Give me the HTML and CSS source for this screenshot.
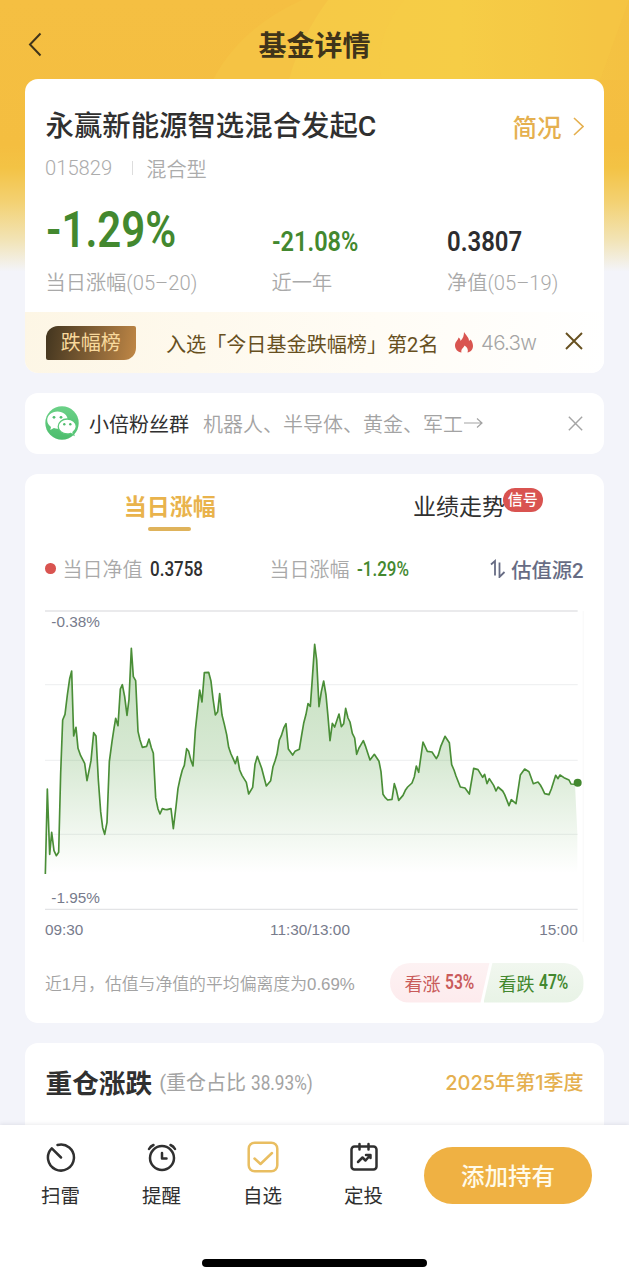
FILE: index.html
```html
<!DOCTYPE html>
<html lang="zh-CN">
<head>
<meta charset="utf-8">
<title>基金详情</title>
<link rel="stylesheet" href="styles.css">
</head>
<body>
<div class="screen">
  <svg class="backdrop" viewBox="0 0 629 280" aria-hidden="true">
    <defs>
      <linearGradient id="base" x1="0" y1="0" x2="0" y2="1">
        <stop offset="0" stop-color="#f5bf42"/><stop offset=".52" stop-color="#f4be40"/>
        <stop offset=".6" stop-color="#f3c345"/><stop offset=".72" stop-color="#f3d172"/>
        <stop offset=".86" stop-color="#f2e4b7"/><stop offset=".97" stop-color="#f3f4fa"/>
      </linearGradient>
      <linearGradient id="ray" x1="0" y1="0" x2="1" y2="0">
        <stop offset="0" stop-color="#f6c946"/><stop offset=".5" stop-color="#f6cc46"/><stop offset="1" stop-color="#f4c142"/>
      </linearGradient>
    </defs>
    <rect width="629" height="280" fill="url(#base)"/>
    <path d="M302 0Q240 28 213 80H629V0Z" fill="#f5c344"/>
    <path d="M328 0Q300 38 289 80H629V0Z" fill="url(#ray)"/>
    <path d="M404 0Q372 40 382 80H600L629 0Z" fill="#f8d04a" opacity=".18"/>
  </svg>

  <header class="nav">
    <svg class="back" viewBox="0 0 14 26"><path d="M12.500 1.500 2 12.500 12.500 23.500"/></svg>
    <h1>基金详情</h1>
  </header>

  <main>
    <section class="card summary">
      <div class="fund-head">
        <h2>永赢新能源智选混合发起C</h2>
        <a class="brief">简况<svg viewBox="0 0 11 19"><path d="M1 1 10 9.500 1 18"/></svg></a>
      </div>
      <div class="fund-meta"><span>015829</span><i></i><span>混合型</span></div>
      <div class="stats">
        <div class="stat"><div class="value"><b class="din big">-1.29%</b></div><label>当日涨幅(05–20)</label></div>
        <div class="stat"><div class="value"><b class="din mid year">-21.08%</b></div><label>近一年</label></div>
        <div class="stat"><div class="value"><b class="din mid net">0.3807</b></div><label>净值(05–19)</label></div>
      </div>
      <div class="rank">
        <span class="rank-tag">跌幅榜</span>
        <span class="rank-text">入选「今日基金跌幅榜」第2名</span>
        <svg class="flame" viewBox="0 0 18 21"><path d="M9 0C10.500 3 14 5 14 9L15.500 7.500C17 9 18 11.500 18 14C18 17.500 15.500 20 12.500 20.500C13.500 18 12.500 15.500 9.500 13.500C9 15.500 5.500 17 6.500 20.500C2.500 20 0 17 0 13.500C0 9.500 3 8.500 3.500 5.500C5 6.500 5.500 7.500 5.500 9C8 6.500 9 3.500 9 0Z"/></svg>
        <span class="heat">46.3w</span>
        <svg class="close brown" viewBox="0 0 18 18"><path d="M1 1 17 17M17 1 1 17"/></svg>
      </div>
    </section>

    <section class="card fans">
      <svg class="wechat" viewBox="0 0 34 34">
        <defs><linearGradient id="wx" x1="0" y1="0" x2="0" y2="1"><stop offset="0" stop-color="#6bd187"/><stop offset="1" stop-color="#4dbd6d"/></linearGradient></defs>
        <circle cx="17" cy="17" r="16.700" fill="url(#wx)"/>
        <path d="M12.500 5.500C6.800 5.500 2.200 9.300 2.200 14.200C2.200 17 3.700 19.300 6 20.900L5.300 24 8.900 22.100C10 22.500 11.200 22.700 12.500 22.700C18.200 22.700 22.800 19 22.800 14.200C22.800 9.300 18.200 5.500 12.500 5.500Z" fill="#fff"/>
        <path d="M22.200 13C17.200 13 13.200 16.300 13.200 20.500C13.200 24.700 17.200 28 22.200 28C23.400 28 24.600 27.800 25.700 27.400L28.800 29 28 26.200C30 24.800 31.300 22.700 31.300 20.500C31.300 16.300 27.300 13 22.200 13Z" fill="#fff" stroke="#5ac879" stroke-width="1.300"/>
        <g fill="#52bd70"><circle cx="9" cy="11.300" r="1.400"/><circle cx="16" cy="11.300" r="1.400"/><circle cx="19.300" cy="18.300" r="1.200"/><circle cx="25.300" cy="18.300" r="1.200"/></g>
      </svg>
      <span class="fans-name">小倍粉丝群</span>
      <span class="fans-text">机器人、半导体、黄金、军工<svg viewBox="0 0 20 12"><path d="M1 6H19M14 1.500 19 6 14 10.500"/></svg></span>
      <svg class="close" viewBox="0 0 18 18"><path d="M1 1 17 17M17 1 1 17"/></svg>
    </section>

    <section class="card trend">
      <div class="tabs">
        <div class="tab active"><span>当日涨幅</span></div>
        <div class="tab"><span>业绩走势<em>信号</em></span></div>
      </div>
      <div class="legend">
        <div class="item first"><i class="dot"></i><span>当日净值</span><b class="din small dark">0.3758</b></div>
        <div class="item second"><span>当日涨幅</span><b class="din small green">-1.29%</b></div>
        <div class="source"><svg viewBox="0 0 16 19"><path d="M1 5.500 5 2V16.500M9.500 3.500V18L14.500 13"/></svg>估值源2</div>
      </div>
      <svg class="chart" viewBox="45 0 1617 1026">
        <defs><linearGradient id="area" gradientUnits="userSpaceOnUse" x1="0" y1="135" x2="0" y2="820"><stop offset="0" stop-color="#4a9b38" stop-opacity=".33"/><stop offset=".5" stop-color="#4a9b38" stop-opacity=".22"/><stop offset="1" stop-color="#4a9b38" stop-opacity="0"/></linearGradient></defs>
        <g class="grid"><path class="edge" d="M45 33H1643M45 928H1643"/><path d="M45 254H1643M45 481H1643M45 703H1643"/><path class="side" d="M1660 33V1026"/></g>
        <path fill="url(#area)" d="M46 822L52 567 59 763 65 697 72 752 79 767 86 757 92 520 98 360 105 343 112 285 119 236 125 213 131 408 138 382 144 445 152 467 164 490 171 542 183 482 191 398 198 408 205 540 212 635 218 683 224 703 231 667 238 485 246 425 252 385 257 355 264 377 271 267 277 254 284 290 291 346 297 298 304 145 310 230 317 242 324 394 330 420 337 442 350 439 357 417 364 443 370 460 377 593 384 627 390 642 397 626 404 628 411 629 423 626 430 686 438 620 444 565 450 537 457 510 463 496 470 446 476 454 483 482 489 498 496 390 502 335 509 270 516 306 523 218 536 217 543 244 549 296 556 345 563 335 569 281 576 345 583 373 590 404 596 442 603 462 609 475 616 491 622 470 629 510 636 526 649 547 656 582 668 562 675 493 682 469 689 488 695 505 702 532 709 558 722 542 729 500 735 483 741 463 748 420 754 407 762 382 768 371 775 447 788 465 795 454 808 448 815 405 821 370 828 343 834 311 841 319 847 235 854 133 860 180 867 320 874 275 881 243 888 285 894 350 900 422 907 370 914 381 927 342 934 380 941 371 947 325 954 354 960 366 967 400 974 414 980 463 987 444 993 434 1000 422 1007 440 1020 480 1033 463 1047 484 1053 515 1059 583 1066 593 1073 600 1086 598 1093 551 1099 570 1106 601 1119 586 1127 569 1133 561 1146 549 1153 530 1159 498 1166 517 1179 426 1192 454 1206 456 1219 476 1225 465 1232 440 1245 409 1258 428 1265 494 1272 510 1278 528 1291 561 1305 564 1318 582 1331 505 1344 509 1358 532 1364 523 1371 551 1378 536 1391 556 1398 573 1404 561 1418 573 1424 584 1437 617 1444 599 1458 611 1465 565 1471 525 1484 507 1497 515 1510 551 1524 546 1531 555 1537 566 1544 581 1557 584 1564 567 1577 526 1584 536 1590 525 1602 533 1617 540 1623 552 1635 553L1642 700V822H46Z"/>
        <path class="line" d="M46 822L52 567 59 763 65 697 72 752 79 767 86 757 92 520 98 360 105 343 112 285 119 236 125 213 131 408 138 382 144 445 152 467 164 490 171 542 183 482 191 398 198 408 205 540 212 635 218 683 224 703 231 667 238 485 246 425 252 385 257 355 264 377 271 267 277 254 284 290 291 346 297 298 304 145 310 230 317 242 324 394 330 420 337 442 350 439 357 417 364 443 370 460 377 593 384 627 390 642 397 626 404 628 411 629 423 626 430 686 438 620 444 565 450 537 457 510 463 496 470 446 476 454 483 482 489 498 496 390 502 335 509 270 516 306 523 218 536 217 543 244 549 296 556 345 563 335 569 281 576 345 583 373 590 404 596 442 603 462 609 475 616 491 622 470 629 510 636 526 649 547 656 582 668 562 675 493 682 469 689 488 695 505 702 532 709 558 722 542 729 500 735 483 741 463 748 420 754 407 762 382 768 371 775 447 788 465 795 454 808 448 815 405 821 370 828 343 834 311 841 319 847 235 854 133 860 180 867 320 874 275 881 243 888 285 894 350 900 422 907 370 914 381 927 342 934 380 941 371 947 325 954 354 960 366 967 400 974 414 980 463 987 444 993 434 1000 422 1007 440 1020 480 1033 463 1047 484 1053 515 1059 583 1066 593 1073 600 1086 598 1093 551 1099 570 1106 601 1119 586 1127 569 1133 561 1146 549 1153 530 1159 498 1166 517 1179 426 1192 454 1206 456 1219 476 1225 465 1232 440 1245 409 1258 428 1265 494 1272 510 1278 528 1291 561 1305 564 1318 582 1331 505 1344 509 1358 532 1364 523 1371 551 1378 536 1391 556 1398 573 1404 561 1418 573 1424 584 1437 617 1444 599 1458 611 1465 565 1471 525 1484 507 1497 515 1510 551 1524 546 1531 555 1537 566 1544 581 1557 584 1564 567 1577 526 1584 536 1590 525 1602 533 1617 540 1623 552 1643 553"/>
        <circle cx="1643" cy="548" r="12" fill="#43882f"/>
        <g class="axis"><text x="64" y="81">-0.38%</text><text x="64" y="910">-1.95%</text><text x="45" y="1005">09:30</text><text x="840" y="1005" text-anchor="middle">11:30/13:00</text><text x="1643" y="1005" text-anchor="end">15:00</text></g>
      </svg>
      <div class="poll-row">
        <p>近1月，估值与净值的平均偏离度为0.69%</p>
        <div class="poll"><div class="vote up"><span>看涨</span><b class="din vote-num">53%</b></div><div class="vote down"><span>看跌</span><b class="din vote-num">47%</b></div></div>
      </div>
    </section>

    <section class="card holdings">
      <h3>重仓涨跌</h3><span class="ratio">(重仓占比 <b class="din ratio-num">38.93%)</b></span><span class="quarter">2025年第1季度</span>
    </section>
  </main>

  <footer class="toolbar">
    <div class="actions">
      <div class="action"><svg viewBox="0 0 32 32"><path d="M12.500 4A13 13 0 1 1 6.800 7.300L16 16.500"/></svg><span>扫雷</span></div>
      <div class="action"><svg viewBox="0 0 32 32"><circle cx="16" cy="17" r="12"/><path d="M16 12V17.500H20.500M3 8Q4.500 5.300 7.500 4M24.500 4Q27.500 5.300 29 8"/></svg><span>提醒</span></div>
      <div class="action gold"><svg viewBox="0 0 32 32"><rect x="1.700" y="1.700" width="28.600" height="28.600" rx="6"/><path d="M7.500 17.500 13.500 23 25 12"/></svg><span>自选</span></div>
      <div class="action"><svg viewBox="0 0 32 32"><rect x="3.500" y="5.500" width="25" height="23" rx="3"/><path d="M11.500 3V8.500M20.500 3V8.500M10 21 14.500 16.500 17.500 19.500 22 14.500M18 14H22.500V17"/></svg><span>定投</span></div>
    </div>
    <button>添加持有</button>
    <i class="home"></i>
  </footer>
</div>
</body>
</html>
```
FILE: styles.css
```css
* { box-sizing: border-box; margin: 0; padding: 0; }
body { background: #f3f4fa; font-family: Roboto, "Noto Sans CJK SC", sans-serif; color: #303030; }
i, em { font-style: normal; }
svg { display: block; fill: none; flex: none; }
.screen { position: relative; width: 629px; height: 1280px; overflow: hidden; }
.backdrop { position: absolute; left: 0; top: 0; width: 629px; height: 280px; }
.nav { position: relative; height: 79px; padding-top: 27px; }
.nav h1 { font-size: 28px; line-height: 40px; font-weight: 600; text-align: center; color: #40341a; }
.back { position: absolute; left: 28px; top: 32px; width: 14px; height: 26px; stroke: #40341a; stroke-width: 2; }
main { position: relative; margin: 0 25px; display: flex; flex-direction: column; gap: 20px; }
.card { width: 578.500px; background: #fff; border-radius: 13px; overflow: hidden; }

/* DIN-style condensed figures */
.din { display: inline-block; font-family: Roboto, sans-serif; font-weight: 600; white-space: nowrap; transform-origin: 0 50%; }

.summary { height: 294px; display: flex; flex-direction: column; }
.fund-head { display: flex; justify-content: space-between; height: 62px; padding: 28px 20px 0 20.500px; }
.fund-head h2 { font-family: Roboto, "Noto Sans CJK SC", sans-serif; font-size: 28.400px; line-height: 40px; font-weight: 500; white-space: nowrap; }
.brief { display: flex; align-items: center; gap: 11px; height: 40px; margin-top: -1px; font-size: 24.500px; font-weight: 500; color: #e5b04f; }
.brief svg { width: 11px; height: 19px; stroke: #e5b04f; stroke-width: 1.600; }
.fund-meta { display: flex; align-items: center; height: 54px; padding-left: 20px; font-size: 20.200px; color: #acacac; font-weight: 350; }
.fund-meta i { width: 1px; height: 14px; margin: 0 13px 0 20px; background: #ddd; }
.stats { display: grid; grid-template-columns: 226px 175.500px 1fr; height: 117px; padding-left: 20.500px; }
.value { display: flex; align-items: flex-end; height: 68px; line-height: 1; color: #43882f; white-space: nowrap; }
.stat label { display: block; font-size: 20.200px; line-height: 30px; height: 30px; margin-top: 5px; color: #a9a9a9; font-weight: 350; white-space: nowrap; }
.big { font-size: 50px; transform: scaleX(.84); margin-bottom: 8px; }
.mid { font-size: 27.500px; margin-bottom: 8px; }
.year { transform: scaleX(.855); }
.net { color: #2d2d2f; transform: scaleX(.87); }
.rank { display: flex; align-items: center; height: 61px; padding: 0 21px 0 20.500px; background: linear-gradient(100deg, #fdf6e5, #fffcf5 60%, #fff); }
.rank-tag { width: 90.500px; height: 34px; border-radius: 12px 2px 12px 2px; background: linear-gradient(100deg, #42351f, #8c6638 60%, #c08745); color: #f8d99c; font-size: 20px; line-height: 34px; text-align: center; }
.rank-text { margin-left: 30px; width: 289px; padding-top: 2px; color: #67501f; font-size: 20.100px; white-space: nowrap; }
.flame { width: 18px; height: 21px; fill: #d95550; }
.heat { margin-left: 8px; font: 350 20.500px Inter, sans-serif; color: #a5a5a5; letter-spacing: -.75px; }
.close { width: 15px; height: 15px; margin-left: auto; stroke: #a5a5a5; stroke-width: 1.700; }
.close.brown { width: 18px; height: 18px; margin-top: -4px; stroke: #67501f; stroke-width: 1.900; }

.fans { height: 60.500px; display: flex; align-items: center; padding: 0 21px 0 20px; font-size: 20px; white-space: nowrap; }
.wechat { width: 34px; height: 34px; }
.fans-name { margin-left: 10px; }
.fans-text { display: flex; align-items: center; margin-left: 14px; color: #a3a3a3; font-weight: 350; }
.fans-text svg { width: 20px; height: 12px; stroke: #a3a3a3; stroke-width: 1.200; }

.trend { height: 549px; }
.tabs { display: grid; grid-template-columns: 1fr 1fr; height: 74px; }
.tab { display: flex; justify-content: center; padding-top: 17px; font-size: 23px; line-height: 34px; }
.tab span { position: relative; height: 42px; }
.tab.active { color: #e9b34c; font-weight: 600; }
.tab.active span::after { content: ""; position: absolute; left: 24px; top: 36.500px; width: 43px; height: 4px; border-radius: 2px; background: #dfb35b; }
.tab em { position: absolute; left: 90px; top: -3px; width: 40px; height: 24px; border-radius: 12px; background: #d95350; color: #fff; font-size: 15px; line-height: 24px; text-align: center; font-weight: 500; }
.legend { display: flex; align-items: center; height: 42px; padding: 0 20px; font-size: 20px; white-space: nowrap; }
.item { display: flex; align-items: center; color: #a9a9a9; font-weight: 350; }
.first { width: 224.500px; }
.dot { width: 10.500px; height: 10.500px; margin-right: 7px; border-radius: 50%; background: #d95450; }
.small { margin-left: 7px; padding-top: 1px; font-size: 20px; transform: scaleX(.85); font-weight: 500; }
.dark { color: #303030; }
.green { color: #43882f; }
.source { display: flex; align-items: center; gap: 5px; margin-left: auto; color: #676c84; font-weight: 500; font-size: 20.300px; }
.source svg { width: 16px; height: 19px; stroke: #676c84; stroke-width: 1.800; }
.chart { width: 539px; height: 342px; margin: 10px 0 0 20px; overflow: visible; }
.grid path { stroke: #f0f1f2; stroke-width: 4; }
.grid .edge { stroke: #e3e4e6; stroke-width: 4; }
.grid .side { stroke: #fafafa; }
.line { stroke: #4a8e37; stroke-width: 5; stroke-linejoin: round; }
.axis { fill: #777b8c; font: 46px "Liberation Sans", sans-serif; }
.poll-row { display: flex; align-items: center; justify-content: space-between; height: 40px; margin-top: 21px; padding: 0 20px; }
.poll-row p { font-family: "Liberation Sans", "Noto Sans CJK SC", sans-serif; font-size: 16.850px; font-weight: 350; color: #a3a3a3; white-space: nowrap; }
.poll { display: flex; width: 194px; height: 40px; color: #43882f; font-size: 18px; }
.vote { display: flex; align-items: center; width: 100px; height: 40px; white-space: nowrap; }
.up { padding-left: 15px; border-radius: 20px 0 0 20px; background: linear-gradient(#fdf2f3, #fdebed); color: #c95b5b; clip-path: polygon(0 0, 100% 0, 91% 100%, 0 100%); }
.down { margin-left: -6px; padding-left: 15px; border-radius: 0 20px 20px 0; background: linear-gradient(#f1f7ef, #e8f3e6); clip-path: polygon(9% 0, 100% 0, 100% 100%, 0 100%); }
.vote-num { margin-left: 4px; font-size: 19.500px; transform: scaleX(.8); }

.holdings { height: 110px; display: flex; align-items: center; padding: 0 20px 32px 20.500px; white-space: nowrap; }
.holdings h3 { font-size: 26.700px; font-weight: 600; }
.ratio { margin-left: 7px; font-size: 20px; font-weight: 400; color: #a3a3a3; }
.ratio-num { font-weight: 400; width: 60px; transform: scaleX(.86); }
.quarter { margin-left: auto; font-family: Inter, "Noto Sans CJK SC", sans-serif; font-size: 20px; font-weight: 500; color: #e5b04f; }

.toolbar { position: absolute; left: 0; bottom: 0; width: 629px; height: 155px; padding: 16px 37px 0 10px; display: flex; justify-content: space-between; background: #fff; box-shadow: 0 -1px 4px rgba(30, 35, 60, .09); }
.actions { display: flex; }
.action { width: 101px; display: flex; flex-direction: column; align-items: center; font-size: 19.500px; line-height: 30px; }
.action svg { width: 32px; height: 32px; margin-bottom: 8.500px; stroke: #303030; stroke-width: 2.500; stroke-linecap: round; stroke-linejoin: round; }
.gold svg { stroke: #e9be61; }
.toolbar button { width: 168px; height: 57px; margin-top: 6px; border: 0; border-radius: 29px; background: #efb143; color: #fffbea; font: 500 23.500px/57px "Noto Sans CJK SC", sans-serif; }
.home { position: absolute; left: 202px; top: 134px; width: 225px; height: 8px; border-radius: 4px; background: #000; }
```
